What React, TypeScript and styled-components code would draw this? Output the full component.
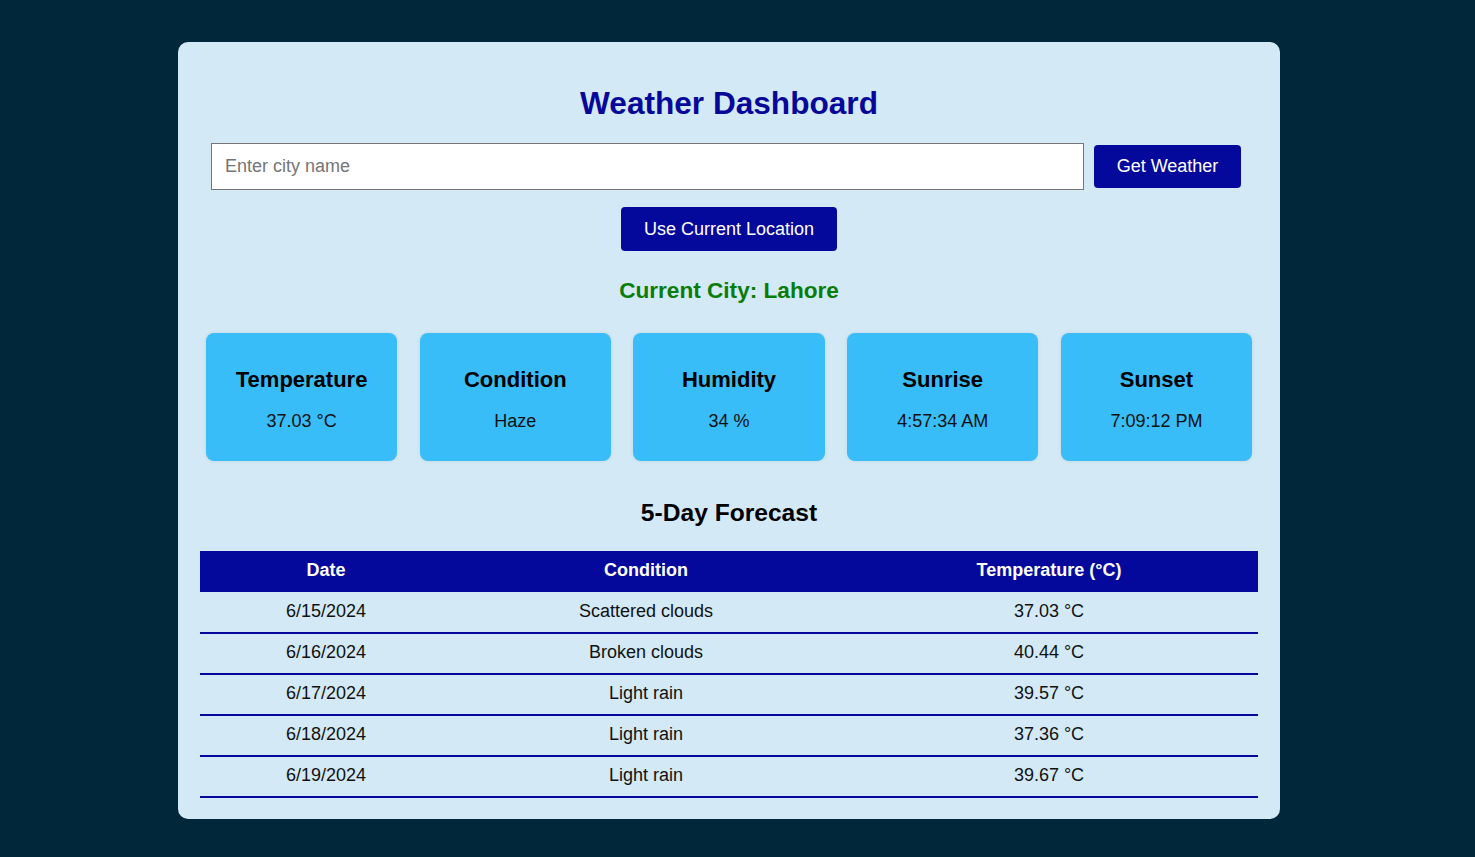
import React from "react";
import styled, { createGlobalStyle } from "styled-components";

const Global = createGlobalStyle`
  html, body { margin: 0; padding: 0; background: #01273a; }
  body { font-family: "Liberation Sans", Arial, sans-serif; }
  * { box-sizing: border-box; }
`;

const Page = styled.div`
  padding: 42px 0 38px 178px;
`;

const Container = styled.div`
  width: 1102px;
  background: #d3e9f5;
  border-radius: 10px;
  padding: 22px 22px 21px;
  display: flex;
  flex-direction: column;
  align-items: center;
`;

const Title = styled.h1`
  margin: 21px 0 0;
  font-size: 31.6px;
  line-height: 37px;
  font-weight: bold;
  color: #07089a;
`;

const SearchRow = styled.div`
  align-self: stretch;
  margin: 21px 17px 0 11px;
  display: flex;
  align-items: center;
  gap: 10px;
`;

const CityInput = styled.input`
  flex: 1;
  height: 47px;
  border: 1px solid #767676;
  background: #fff;
  padding: 0 13px;
  font-family: "Liberation Sans", Arial, sans-serif;
  font-size: 18px;
  color: #000;
  outline: none;
  &::placeholder { color: #757575; }
`;

const Button = styled.button<{ $w: number }>`
  width: ${(p) => p.$w}px;
  height: ${(p) => (p.$w > 200 ? 44 : 43)}px;
  background: #05099b;
  color: #fff;
  border: none;
  border-radius: 4px;
  font-family: "Liberation Sans", Arial, sans-serif;
  font-size: 18px;
  padding: 0;
  cursor: pointer;
`;

const LocationButton = styled(Button)`
  margin-top: 17px;
`;

const CityLine = styled.h2`
  margin: 26px 0 0;
  font-size: 22.6px;
  line-height: 28px;
  font-weight: bold;
  color: #087d08;
`;

const Cards = styled.div`
  align-self: stretch;
  margin-top: 28px;
  padding: 0 6px;
  display: flex;
  gap: 22.5px;
`;

const Card = styled.div`
  flex: 1;
  height: 128px;
  padding-top: 4px;
  background: #38bdf8;
  border-radius: 8px;
  box-shadow: 0 0 4px rgba(0, 0, 0, 0.08);
  display: flex;
  flex-direction: column;
  align-items: center;
  justify-content: center;
`;

const CardTitle = styled.div`
  font-size: 22px;
  line-height: 26px;
  font-weight: bold;
  color: #000;
`;

const CardValue = styled.div`
  margin-top: 18px;
  font-size: 18px;
  line-height: 21px;
  color: #111;
`;

const SectionTitle = styled.h2`
  margin: 38px 0 0;
  font-size: 24.6px;
  line-height: 28px;
  font-weight: bold;
  color: #000;
`;

const Table = styled.table`
  align-self: stretch;
  margin-top: 24px;
  border-collapse: collapse;
  table-layout: fixed;
  width: 100%;
`;

const Th = styled.th<{ $w: number }>`
  width: ${(p) => p.$w}px;
  height: 41px;
  background: #05099b;
  color: #fff;
  font-size: 18px;
  font-weight: bold;
  text-align: center;
  padding: 0 0 2px;
`;

const Td = styled.td`
  height: 41px;
  padding: 0 0 2px;
  text-align: center;
  font-size: 18px;
  color: #111;
  border-bottom: 2px solid #05099b;
`;

const stats = [
  ["Temperature", "37.03 °C"],
  ["Condition", "Haze"],
  ["Humidity", "34 %"],
  ["Sunrise", "4:57:34 AM"],
  ["Sunset", "7:09:12 PM"],
];

const forecast = [
  ["6/15/2024", "Scattered clouds", "37.03 °C"],
  ["6/16/2024", "Broken clouds", "40.44 °C"],
  ["6/17/2024", "Light rain", "39.57 °C"],
  ["6/18/2024", "Light rain", "37.36 °C"],
  ["6/19/2024", "Light rain", "39.67 °C"],
];

export default function App() {
  return (
    <Page>
      <Global />
      <Container>
        <Title>Weather Dashboard</Title>
        <SearchRow>
          <CityInput placeholder="Enter city name" />
          <Button $w={147}>Get Weather</Button>
        </SearchRow>
        <LocationButton $w={216}>Use Current Location</LocationButton>
        <CityLine>Current City: Lahore</CityLine>
        <Cards>
          {stats.map(([t, v]) => (
            <Card key={t}>
              <CardTitle>{t}</CardTitle>
              <CardValue>{v}</CardValue>
            </Card>
          ))}
        </Cards>
        <SectionTitle>5-Day Forecast</SectionTitle>
        <Table>
          <thead>
            <tr>
              <Th $w={252}>Date</Th>
              <Th $w={388}>Condition</Th>
              <Th $w={418}>Temperature (°C)</Th>
            </tr>
          </thead>
          <tbody>
            {forecast.map((r) => (
              <tr key={r[0]}>
                {r.map((c, i) => (
                  <Td key={i}>{c}</Td>
                ))}
              </tr>
            ))}
          </tbody>
        </Table>
      </Container>
    </Page>
  );
}
